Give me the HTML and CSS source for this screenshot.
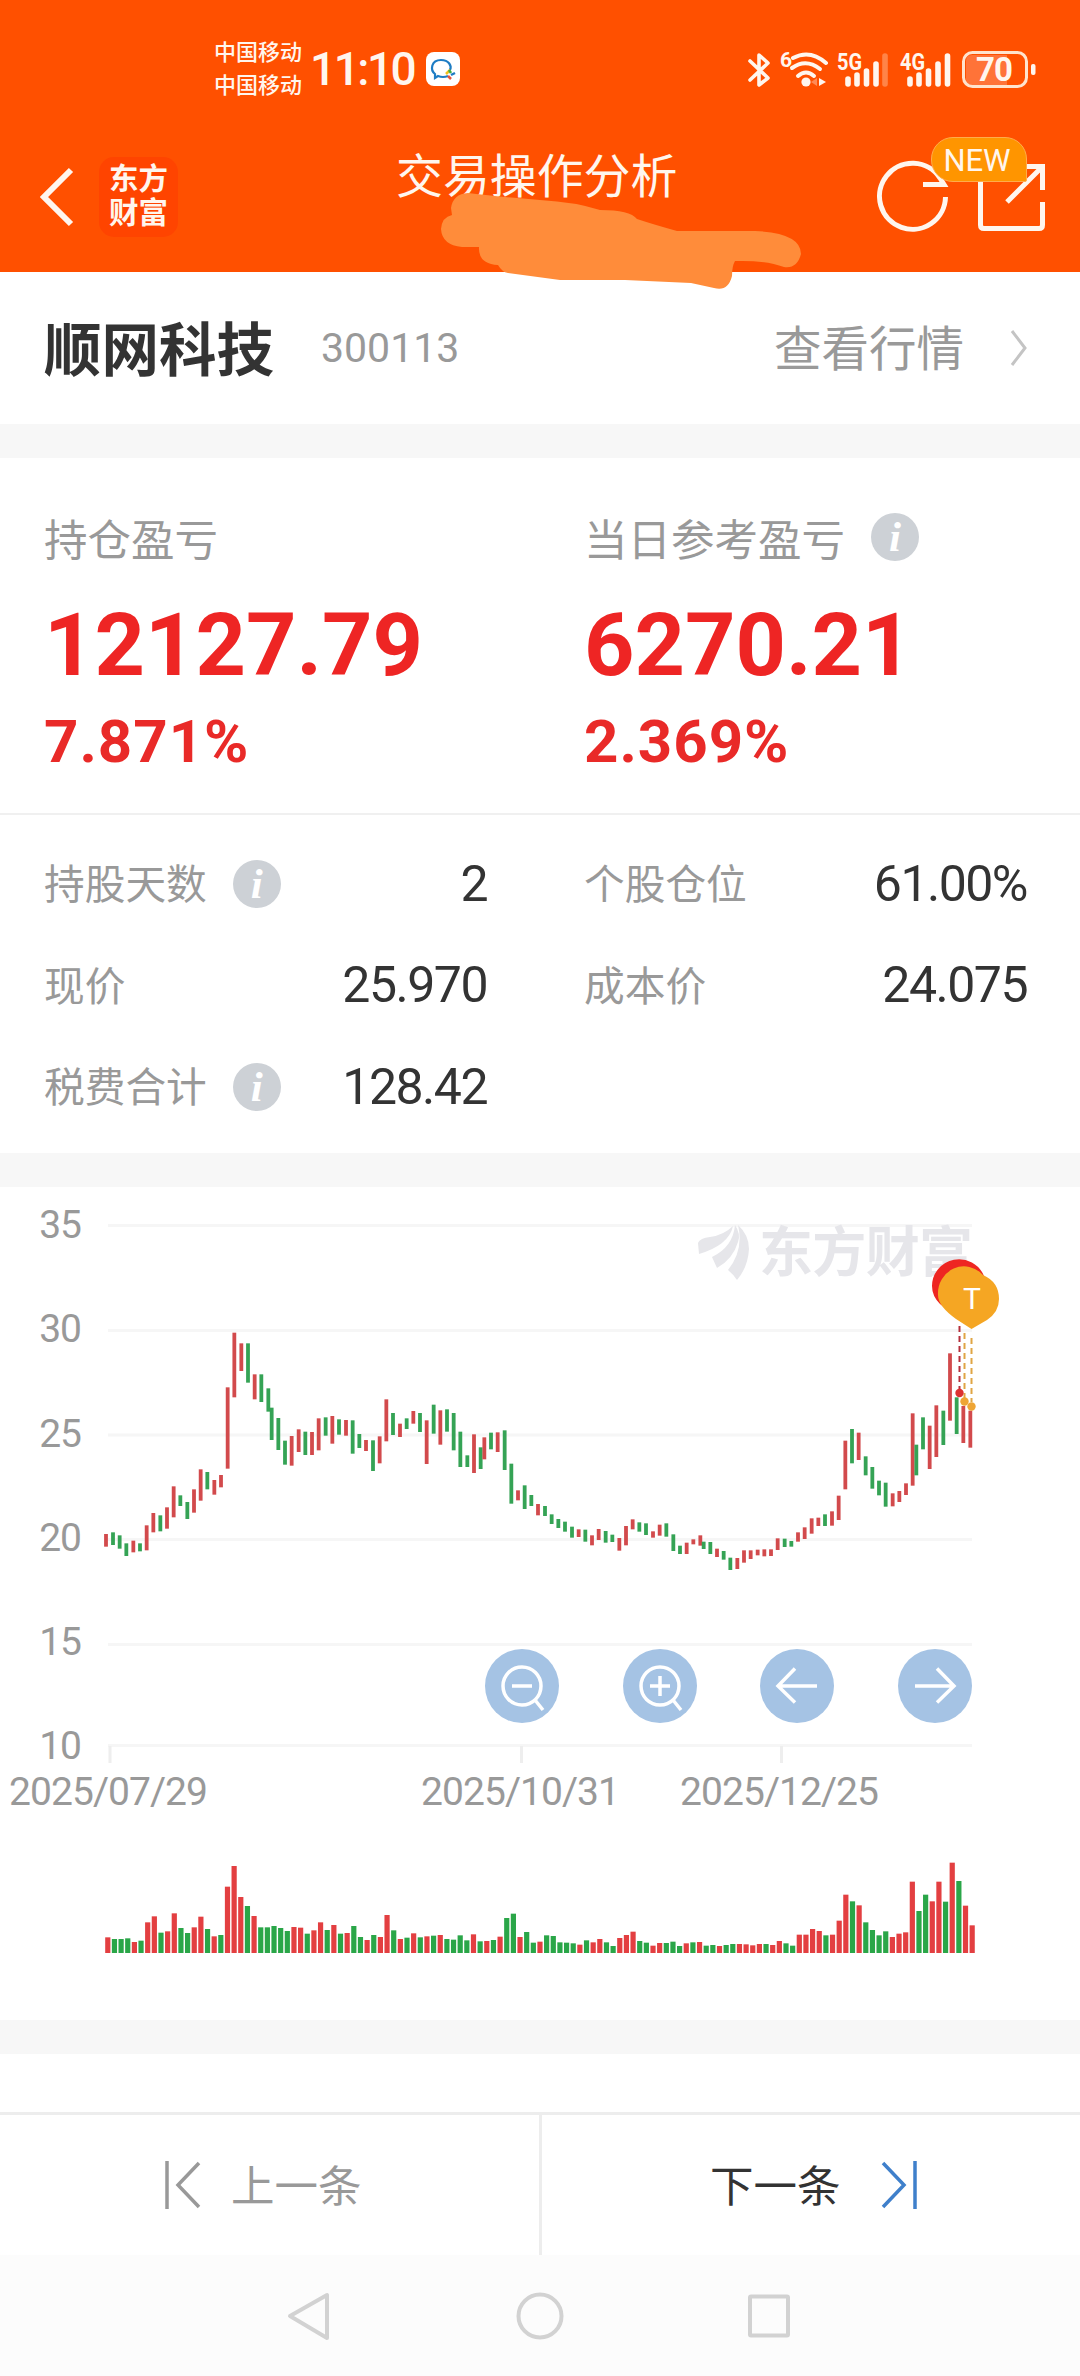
FILE: index.html
```html
<!DOCTYPE html>
<html lang="zh-CN">
<head>
  <meta charset="UTF-8">
  <meta name="viewport" content="width=device-width, initial-scale=1.0">
  <title>交易操作分析</title>
  <link rel="stylesheet" href="styles.css">
</head>
<body>

  <!-- Status bar and title bar -->
  <header class="header">
    <div class="status">
      <div class="carriers">
        <span>中国移动</span>
        <span>中国移动</span>
      </div>
      <span class="time">11:10</span>
      <svg class="chat" width="34" height="34" viewBox="0 0 34 34">
        <rect width="34" height="34" rx="8" fill="#fff"/>
        <path d="M22 24 Q17 26 12 24 L9 26 L9 22 C4 18 5 8 15 8 C23 8 26 14 24 18" fill="none" stroke="#1d7cc4" stroke-width="2.2"/>
        <path d="M20 22 l4 -4" stroke="#f2c11d" stroke-width="2.5"/>
        <path d="M23 18 l2 3" stroke="#3fae49" stroke-width="2.5"/>
        <path d="M25 23 l4 -2" stroke="#1d7cc4" stroke-width="2.5"/>
        <path d="M22 24 l3 3" stroke="#e5533d" stroke-width="2.5"/>
      </svg>
      <svg class="signals" width="294" height="44" viewBox="744 46 294 44">
        <path d="M748 60 L766 77 L757 84 V54 L766 62 L748 79" fill="none" stroke="#fff6ee" stroke-width="3.6" stroke-linejoin="round" stroke-linecap="round"/>
        <text class="sig-text" x="778" y="66" font-size="21">6</text>
        <g fill="none" stroke="#fff6ee" stroke-width="4" stroke-linecap="round">
          <path d="M791 57 Q808 48 824 62"/>
          <path d="M790 67 Q804 57 818 68"/>
          <path d="M796 75 Q804 68 812 75"/>
        </g>
        <circle cx="804" cy="81" r="4.6" fill="#fff6ee"/>
        <path d="M817 77 l7 4 l-7 4 z" fill="#fff6ee"/>
        <path d="M815 77 l-6 4 l6 4 z" fill="#ff8a55"/>
        <text class="sig-text" x="835" y="69" font-size="23" textLength="25" lengthAdjust="spacingAndGlyphs">5G</text>
        <text class="sig-text" x="898" y="69" font-size="23" textLength="25" lengthAdjust="spacingAndGlyphs">4G</text>
        <g stroke="#fff6ee" stroke-width="5.6" stroke-linecap="round">
          <path d="M846 78 V83 M855 74 V83 M864.5 70 V83 M874 63 V83"/>
          <path d="M883 55 V83" stroke="#ff8448"/>
          <path d="M908 78 V83 M917 74 V83 M926.5 70 V83 M936 63 V83 M945.5 55 V83"/>
        </g>
        <path d="M970 54 H1005 V84 H970 Q964 84 964 78 V60 Q964 54 970 54 Z" fill="#ff7338"/>
        <rect x="961.5" y="51.5" width="63" height="34" rx="9" fill="none" stroke="#ffe3cd" stroke-width="3"/>
        <rect x="1029" y="63" width="4.5" height="11" rx="2" fill="#fff6ee"/>
        <text class="battery-text" x="992" y="80" text-anchor="middle">70</text>
      </svg>
    </div>

    <div class="titlebar">
      <svg class="back" width="36" height="60" viewBox="0 0 36 60">
        <path d="M31 3 L4 30 L31 57" fill="none" stroke="#fff6ee" stroke-width="6"/>
      </svg>
      <div class="brand">东方<br>财富</div>
      <h1>交易操作分析</h1>
      <div class="actions">
        <svg width="170" height="80" viewBox="877 157 170 80">
          <g fill="none" stroke="#fff6ee" stroke-width="5">
            <path d="M945.5 197 A33 33 0 1 1 940 178 L944 184.500 H923"/>
            <path d="M980.500 160 V225 Q980.500 228.500 984 228.500 H1039 Q1042.500 228.500 1042.500 225 V202"/>
            <path d="M1018 166.500 H1042.500 V190 M1042 167 L1007 202"/>
          </g>
        </svg>
        <span class="badge">NEW</span>
      </div>
    </div>

    <!-- Brush stroke over the account name -->
    <svg class="brush" width="366" height="102" viewBox="438 190 366 102">
      <path fill="#ff8c3a" d="M451 208 Q453 194 468 193 Q490 196 540 200 Q575 202 600 210 Q630 210 637 219 Q652 224 677 231 H755 Q801 233 801 254 Q797 269 784 267 Q765 260 735 261 Q732 266 732 276 Q728 292 714 288 L691 283 L625 280 H560 L508 273 Q502 272 498 265 Q478 264 479 247 H462 Q442 245 441 229 Q442 217 452 215 Z"/>
    </svg>
  </header>

  <section class="stock">
    <h2>顺网科技</h2>
    <span class="code">300113</span>
    <a class="quote">查看行情</a>
    <svg width="18" height="38" viewBox="0 0 18 38">
      <path d="M2 2 L15 19 L2 36" fill="none" stroke="#c4c4c4" stroke-width="3"/>
    </svg>
  </section>

  <section class="summary">
    <div class="profit">
      <div class="label">持仓盈亏</div>
      <div class="amount">12127.79</div>
      <div class="percent">7.871%</div>
    </div>
    <div class="profit">
      <div class="label">当日参考盈亏 <i class="info">i</i></div>
      <div class="amount">6270.21</div>
      <div class="percent">2.369%</div>
    </div>
  </section>

  <section class="details">
    <div class="item"><span>持股天数</span><i class="info">i</i><b>2</b></div>
    <div class="item"><span>个股仓位</span><b>61.00%</b></div>
    <div class="item"><span>现价</span><b>25.970</b></div>
    <div class="item"><span>成本价</span><b>24.075</b></div>
    <div class="item"><span>税费合计</span><i class="info">i</i><b>128.42</b></div>
  </section>

  <section class="chart">
    <svg width="1080" height="833" viewBox="0 1187 1080 833">
      <g stroke="#f6f6f6" stroke-width="3">
        <path d="M108 1225.500 H972 M108 1330.500 H972 M108 1435 H972 M108 1539.500 H972 M108 1644.500 H972 M108 1745.500 H972"/>
        <path d="M110 1746 V1763 M521.500 1746 V1763 M781.500 1746 V1763" stroke="#eee"/>
      </g>
      <g class="axis" text-anchor="end">
        <text x="81" y="1238">35</text>
        <text x="81" y="1342">30</text>
        <text x="81" y="1447">25</text>
        <text x="81" y="1551">20</text>
        <text x="81" y="1655">15</text>
        <text x="81" y="1759">10</text>
      </g>
      <g class="axis">
        <text x="9" y="1805" textLength="198">2025/07/29</text>
        <text x="421" y="1805" textLength="198">2025/10/31</text>
        <text x="680" y="1805" textLength="198">2025/12/25</text>
      </g>

      <!-- Watermark -->
      <g fill="#e6e6ea">
        <path d="M698 1243 Q700 1238 710 1237 Q724 1235 733 1226 Q729 1245 699 1254 Z"/>
        <path d="M712 1257 Q733 1247 735 1225 Q741 1234 738 1242 Q733 1259 717 1268 Z"/>
        <path d="M738 1225 Q749 1235 749 1249 Q748 1267 737 1280 Q734 1275 728 1270 Q744 1250 738 1225 Z"/>
        <text class="watermark" x="759" y="1272" textLength="214">东方财富</text>
      </g>

      <g id="candles"></g>
      <g id="volume"></g>

      <!-- Trade markers -->
      <g fill="none" stroke-width="2" stroke-dasharray="6 4">
        <path d="M959.500 1326 V1389" stroke="#b5303c"/>
        <path d="M964.500 1333 V1398" stroke="#e0a545"/>
        <path d="M971.500 1338 V1402" stroke="#e0a545"/>
      </g>
      <circle cx="959.500" cy="1393" r="4.200" fill="#dc3232"/>
      <circle cx="964.500" cy="1401.500" r="4.200" fill="#eea535"/>
      <circle cx="971.500" cy="1406.500" r="4.200" fill="#eea535"/>
      <path d="M932 1286 A27 27 0 0 1 984 1276 L960 1320 L940 1304 Q932 1296 932 1286 Z" fill="#ee2622"/>
      <path d="M938 1295 A26 27 0 0 1 983 1275 Q999 1282 999 1299 Q999 1312 987 1320 L971.500 1329 L956 1319 Q938 1306 938 1295 Z" fill="#f5a623"/>
      <text class="marker" x="972" y="1309" text-anchor="middle">T</text>

      <!-- Zoom and pan buttons -->
      <g fill="#a5c3e4">
        <circle cx="522" cy="1686" r="37"/>
        <circle cx="660" cy="1686" r="37"/>
        <circle cx="797" cy="1686" r="37"/>
        <circle cx="935" cy="1686" r="37"/>
      </g>
      <g fill="none" stroke="#fff" stroke-width="3.5">
        <circle cx="522" cy="1686" r="19"/>
        <path d="M512 1686 H532 M535 1700 L543 1710"/>
        <circle cx="660" cy="1686" r="19"/>
        <path d="M650 1686 H670 M660 1676 V1696 M673 1700 L681 1710"/>
        <path d="M817 1686 H778 M795 1668.500 L778 1686 L795 1702.500"/>
        <path d="M915 1686 H954 M937 1668.500 L954 1686 L937 1702.500"/>
      </g>
    </svg>
  </section>

  <nav class="pager">
    <a class="prev">
      <svg width="36" height="48" viewBox="0 0 36 48">
        <path d="M2 0 V48 M34 2 L13 24 L34 46" fill="none" stroke="#999" stroke-width="3.500"/>
      </svg>
      <span>上一条</span>
    </a>
    <a class="next">
      <span>下一条</span>
      <svg width="36" height="48" viewBox="0 0 36 48">
        <path d="M34 0 V48 M2 2 L23 24 L2 46" fill="none" stroke="#3f80cb" stroke-width="3.500"/>
      </svg>
    </a>
  </nav>

  <footer class="system">
    <svg width="504" height="50" viewBox="287 2291 504 50">
      <g fill="none" stroke="#d2d2d2" stroke-width="4" stroke-linejoin="round">
        <path d="M327 2295 V2338 L290 2316 Z"/>
        <circle cx="540" cy="2316" r="21.500"/>
        <rect x="750" y="2296.500" width="38" height="39" rx="1"/>
      </g>
    </svg>
  </footer>

  <script>
    var ns = 'http://www.w3.org/2000/svg';

    // Adds one bar to a group
    function bar (group, x, top, bottom, width, color) {
      var rect = document.createElementNS(ns, 'rect');
      rect.setAttribute('x', x - width / 2);
      rect.setAttribute('y', top);
      rect.setAttribute('width', width);
      rect.setAttribute('height', bottom - top);
      rect.setAttribute('class', color == 'r' ? 'up' : 'down');
      group.appendChild(rect);
    }

    // Price bars: colour, x, top, bottom in thirds of a pixel from the origin
    var parts = [
      [90, 1300, 'r48,702,740 g69,697,735 g89,706,746 g109,730,768 r130,722,757 g150,730,754 r170,676,751 r190,639,697 g211,646,694 r231,622,686 r251,559,652 g271,586,618 g292,606,657 r312,568,638 r332,508,602 g352,516,568 r373,540,584 r393,525,562 r413,262,506 r433,98,292 r454,130,213 g474,130,248 r494,223,298 g514,223,306 g535,265,335 g545,323,420 g565,354,450 g585,422,494 r605,408,497 r626,388,456 g646,395,465 r666,396,465 r686,355,451 g707,352,407 r727,348,431 g747,358,404 r768,360,407 g788,361,461 g808,402,444 r828,420,453 g849,421,513 r869,409,490 r889,298,424'],
      [370, 1360, 'g69,159,225 r90,191,231 g110,175,207 r130,153,191 g150,159,216 r170,181,312 g191,134,221 r211,151,254 g231,148,215 g251,159,271 g271,215,321 g292,286,321 r312,223,339 g332,262,327 r343,232,298 g363,218,268 r383,217,276 g404,211,330 g424,311,431 r444,391,421 g464,376,447 g484,405,438 r504,432,466 g525,438,468 g545,463,492 g565,477,504 g585,485,515 g606,500,533 r626,508,531 g646,509,545 r666,526,556 r686,507,540 g707,513,548 g727,524,546 r748,534,572 r768,498,556 r788,478,508 g808,487,515 g828,490,525 r849,514,533 r869,494,527 g889,490,530 g910,523,573 g930,557,582 r950,548,582 r970,538,553'],
      [660, 1360, 'r121,526,557 g131,545,567 g151,546,582 r171,566,591 g191,573,599 g211,593,630 r232,594,627 r252,571,608 r272,571,597 r293,569,586 r313,568,589 r333,568,588 r353,535,570 g374,536,561 g394,543,560 r414,517,545 r434,502,537 r455,475,521 r475,473,498 g495,463,498 r516,454,497 r536,407,480 r556,242,388 g576,207,310 r596,218,300 g617,289,346 g637,321,386 g657,362,406 g677,368,440 r698,400,439 r718,393,426 r738,370,405 r758,160,377 g769,254,346 g789,172,268 r809,197,327 r829,136,291 g850,152,255 r870,-20,182 g890,112,222 r910,138,249 r931,152,263']
    ];
    var candles = document.querySelector('#candles');

    parts.forEach(function (part) {
      part[2].split(' ').forEach(function (item) {
        var v = item.slice(1).split(',');
        bar(candles, part[0] + v[0] / 3, part[1] + v[1] / 3, part[1] + v[2] / 3, 3.8, item[0]);
      });
    });

    // Volume bars: colour and top
    var volumes = 'r292 g297 g297 g295 r306 g302 r247 r229 g278 r274 r220 g264 g279 r262 r230 g267 r289 g285 r140 r78 r171 g198 r228 g262 g262 g258 g264 g273 r261 r263 g281 r271 r247 g270 r255 g281 r279 g258 g291 r300 g285 r291 r225 g271 r297 g293 r280 g292 r289 g287 r285 g297 g299 g286 g301 r283 g304 r303 g300 r290 g234 g221 r291 g276 g308 r305 g286 g288 g307 g308 g310 r314 g301 r307 r297 g307 g318 r294 r285 r275 g303 g308 r317 r309 g309 g305 g318 r310 g307 r306 g317 g315 r318 g315 g312 r312 r313 r316 r312 g312 r315 r303 g310 g317 r284 r284 r267 r273 g286 r284 r242 r164 g184 r196 g247 g270 g286 g274 r291 r281 r277 r125 g213 g164 r184 r125 g185 r68 g123 r197 r256'.split(' ');
    var volume = document.querySelector('#volume');

    volumes.forEach(function (item, i) {
      bar(volume, 107.8 + i * 6.649, 1840 + item.slice(1) / 3, 1953, 5.2, item[0]);
    });
  </script>
</body>
</html>
```
FILE: styles.css
```css
* {
  box-sizing: border-box;
}

body {
  margin: 0;
  width: 1080px;
  background: #fff;
  color: #333;
  font-family: Roboto, 'Noto Sans CJK SC', sans-serif;
}

h1, h2 {
  margin: 0;
}

/* Header */
.header {
  position: relative;
  height: 272px;
  background: #ff5000;
  color: #fff6ee;
}

.status {
  display: flex;
  align-items: center;
  height: 136px;
  padding: 2px 40px 0 214px;
}

.carriers {
  display: flex;
  flex-direction: column;
  width: 90px;
  font-size: 22px;
  font-weight: 500;
  line-height: 33px;
}

.time {
  width: 117px;
  padding-left: 6px;
  font-size: 46px;
  font-weight: 500;
  letter-spacing: -2.5px;
}

.chat {
  margin-left: 5px;
}

.signals {
  margin-left: auto;
}

.sig-text {
  fill: #fff6ee;
  font-weight: 700;
}

.battery-text {
  fill: #fff6ee;
  font-size: 33px;
  font-weight: 700;
  letter-spacing: -1px;
}

.titlebar {
  display: flex;
  align-items: center;
  height: 122px;
  padding: 0 33px 0 40px;
}

.brand {
  width: 79px;
  height: 80px;
  margin-left: 23px;
  padding-top: 5px;
  border-radius: 15px;
  background: #ff4400;
  font-size: 29.5px;
  font-weight: 700;
  line-height: 34px;
  text-align: center;
}

h1 {
  margin: -48px 0 0 218px;
  font-size: 46.9px;
  font-weight: 400;
}

.actions {
  position: relative;
  height: 80px;
  margin-left: auto;
}

.badge {
  position: absolute;
  left: 54px;
  top: -20px;
  width: 96px;
  height: 45px;
  border: 1px solid #ffac4b;
  border-radius: 22px 22px 2px 22px;
  background: #ff9500;
  font-size: 31px;
  line-height: 45px;
  text-align: center;
  text-indent: -4px;
}

.brush {
  position: absolute;
  left: 438px;
  top: 190px;
}

/* Stock name */
.stock {
  display: flex;
  align-items: center;
  height: 152px;
  padding: 0 52px 0 44px;
  color: #999;
}

.stock h2 {
  padding-bottom: 5px;
  color: #333;
  font-size: 57.5px;
  font-weight: 700;
}

.code {
  margin-left: 47px;
  font-size: 41px;
}

.quote {
  margin: 0 46px 0 auto;
  padding-bottom: 6px;
  font-size: 47.5px;
}

/* Profit */
.summary {
  display: grid;
  grid-template-columns: 540px 1fr;
  height: 391px;
  padding: 46px 0 0 44px;
  border-top: 34px solid #f7f7f7;
  border-bottom: 2px solid #f0f0f0;
}

.label {
  display: flex;
  align-items: center;
  height: 66px;
  color: #999;
  font-size: 43.5px;
}

.info {
  display: flex;
  align-items: center;
  justify-content: center;
  width: 48px;
  height: 48px;
  margin-left: 26px;
  border-radius: 50%;
  background: #cdd1d6;
  color: #fff;
  font-family: 'Liberation Serif', serif;
  font-size: 43px;
  font-weight: 700;
  line-height: 44px;
}

.amount {
  height: 104px;
  margin-top: 23px;
  color: #ee2524;
  font-size: 88px;
  font-weight: 700;
  line-height: 104px;
}

.percent {
  color: #e92a28;
  font-size: 60px;
  font-weight: 700;
  line-height: 90px;
  letter-spacing: 1px;
}

.details {
  display: grid;
  grid-template-columns: 443px 443px;
  grid-auto-rows: 101.5px;
  column-gap: 97px;
  height: 338px;
  padding: 18px 0 0 44px;
}

.item {
  display: flex;
  align-items: center;
  color: #999;
  font-size: 40.7px;
}

.item span {
  padding-bottom: 4px;
}

.item b {
  margin-left: auto;
  color: #333;
  font-size: 50px;
  font-weight: 400;
  letter-spacing: -1.5px;
}

/* Chart */
.chart {
  height: 901px;
  border-top: 34px solid #f7f7f7;
  border-bottom: 34px solid #f7f7f7;
}

.chart svg {
  display: block;
}

.axis {
  fill: #999;
  font-size: 39px;
  letter-spacing: -1px;
}

.watermark {
  font-size: 54px;
  font-weight: 700;
}

.marker {
  fill: #fff;
  font-size: 30px;
}

.up {
  fill: #d24a4c;
}

.down {
  fill: #35a355;
}

#volume .up {
  fill: #e33f41;
}

#volume .down {
  fill: #2aa648;
}

/* Bottom buttons */
.pager {
  display: grid;
  grid-template-columns: 542px 1fr;
  height: 143px;
  margin-top: 58px;
  border-top: 3px solid #ededed;
  font-size: 43.5px;
}

.pager a {
  display: flex;
  align-items: center;
}

.pager span {
  padding-bottom: 4px;
}

.prev {
  gap: 30px;
  padding-left: 165px;
  border-right: 3px solid #ededed;
  color: #999;
}

.next {
  gap: 40px;
  padding-left: 168px;
}

.system {
  display: flex;
  align-items: center;
  height: 121px;
  padding-left: 287px;
  background: #fcfcfc;
}
```
